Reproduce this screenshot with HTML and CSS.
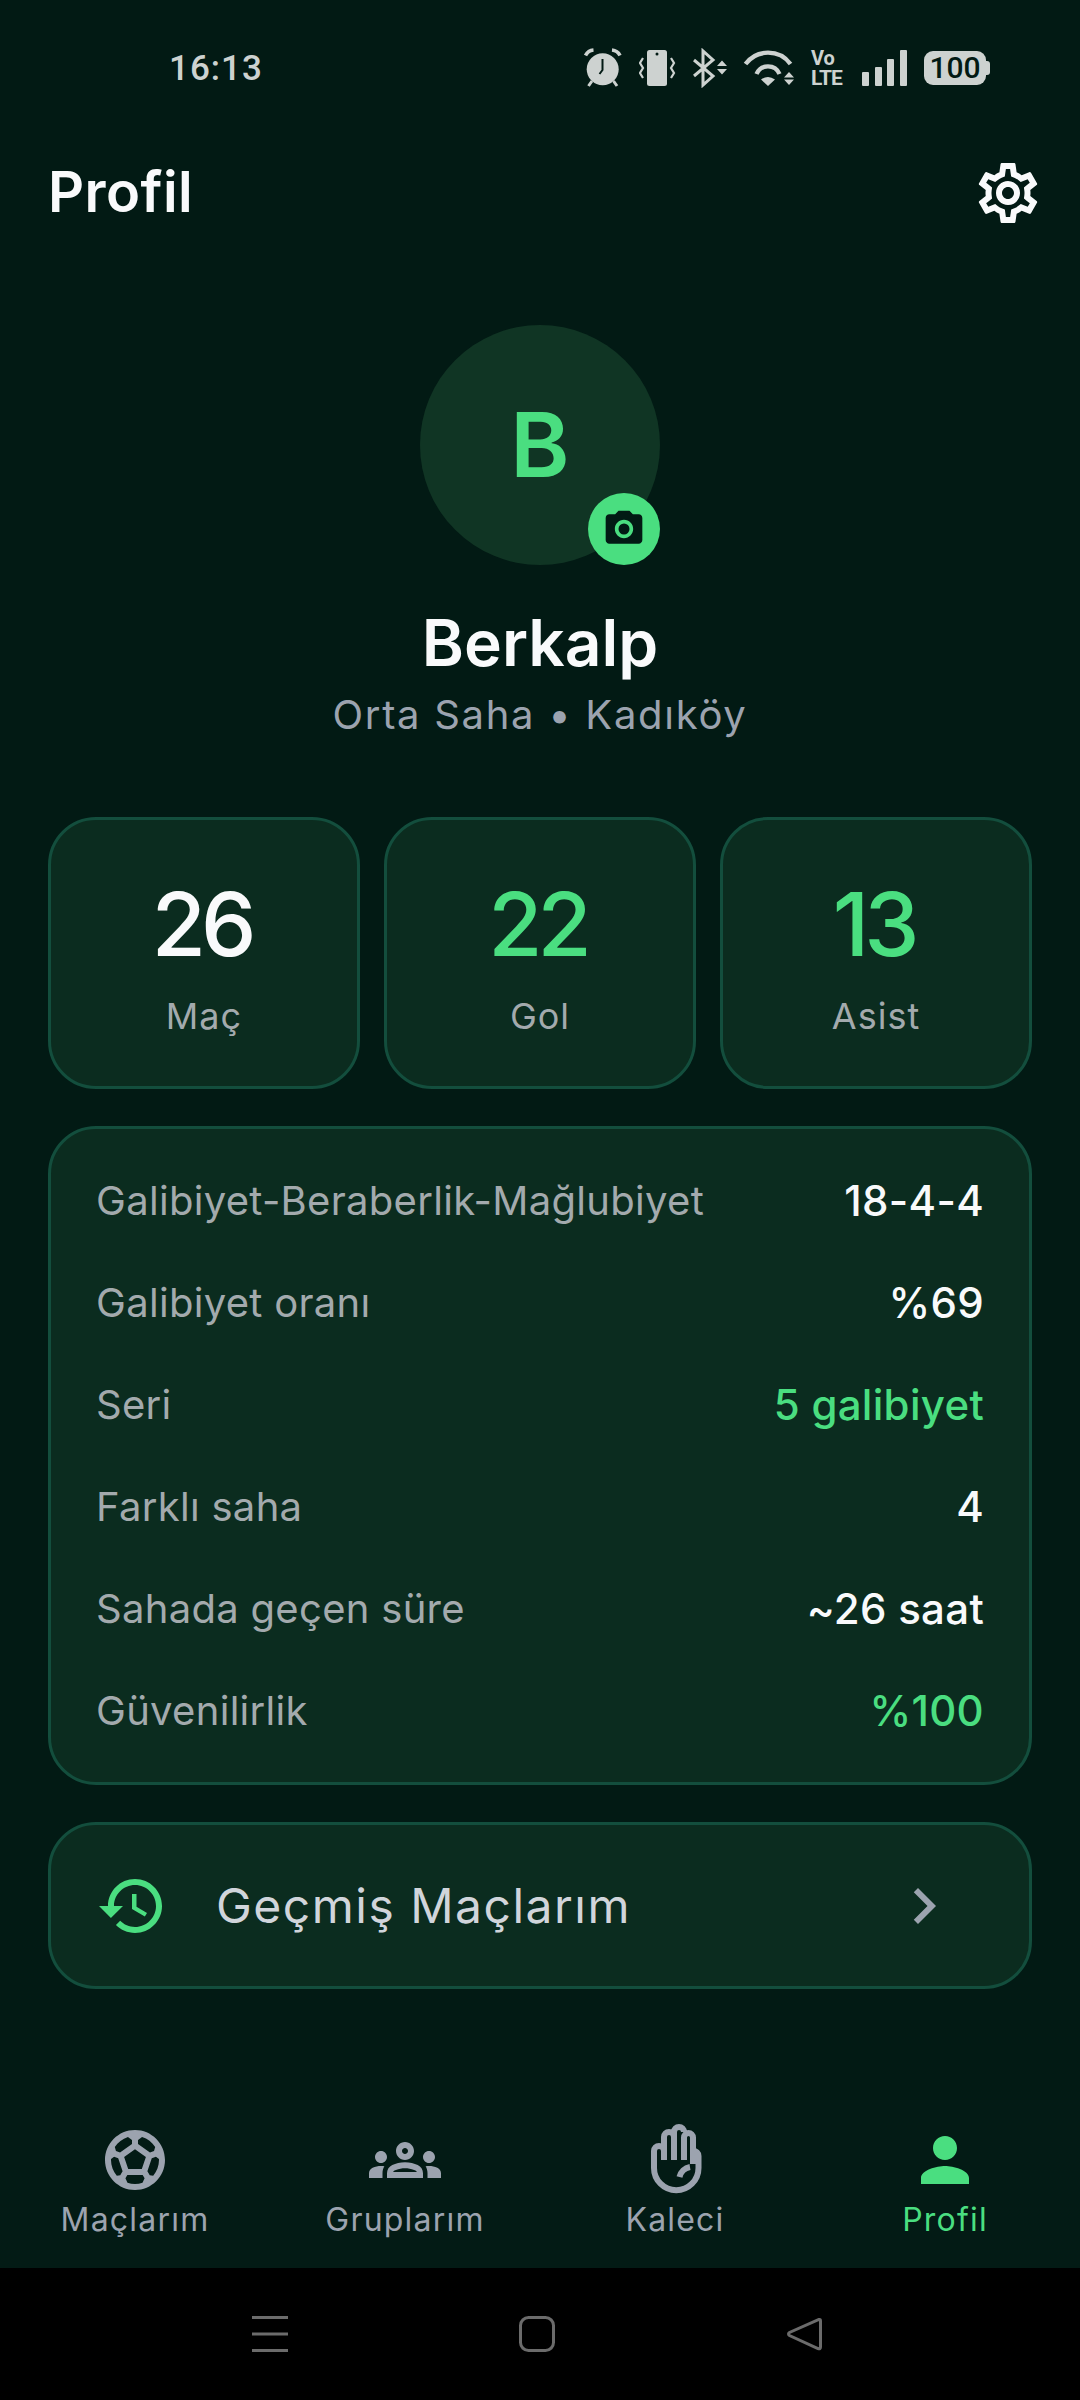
FILE: index.html
```html
<!DOCTYPE html>
<html lang="tr">

<head>
    <meta charset="UTF-8">
    <meta name="viewport" content="width=device-width, initial-scale=1.0">
    <title>Profil</title>

    <link rel="stylesheet" href="styles.css">
</head>

<body>
    <!-- status bar -->
    <div class="status">
        <span class="time">16:13</span>
        <div class="status-icons">
            <svg class="st-alarm" viewBox="0 0 39 40">
                <circle cx="18.7" cy="21.3" r="16" fill="#cdd2d0"/>
                <path d="M1.5 7.5Q4 2.5 9.5 2M36 7.500Q33.500 2.500 28 2" fill="none" stroke="#cdd2d0" stroke-width="3.600"/>
                <path d="M8 33L4.500 38M29.500 33L33 38" fill="none" stroke="#cdd2d0" stroke-width="3"/>
                <path d="M18.500 11V22L15.500 26" fill="none" stroke="#021a14" stroke-width="2"/>
            </svg>
            <svg class="st-vibrate" viewBox="0 0 38 40">
                <rect x="8" y="2" width="20" height="36" rx="2.500" fill="#cdd2d0"/>
                <circle cx="18" cy="6" r="1.500" fill="#021a14"/>
                <path d="M4 10L1 15L4 20L1 25L4 30M32 10L35 15L32 20L35 25L32 30" fill="none" stroke="#cdd2d0" stroke-width="2.200"/>
            </svg>
            <svg class="st-bluetooth" viewBox="0 0 34 40">
                <path d="M1 12L20 28L10 37V3L20 12L1 28" fill="none" stroke="#cdd2d0" stroke-width="3"/>
                <path d="M24 18L29 12.500L34 18zM24 21L29 26.500L34 21z" fill="#cdd2d0"/>
            </svg>
            <svg class="st-wifi" viewBox="0 0 52 40">
                <path d="M2.500 16A28 28 0 0 1 47.500 16M13.500 26A12.500 12.500 0 0 1 36.500 26" fill="none" stroke="#cdd2d0" stroke-width="4.400"/>
                <path d="M18 31.500Q25 26.500 32 31.500L25 38z" fill="#cdd2d0"/>
                <path d="M41 29.500L46 24L51 29.500zM41 31.500L46 37L51 31.500z" fill="#cdd2d0"/>
            </svg>
            <div class="st-volte">
                <span>Vo</span>
                <span class="lte">LTE</span>
            </div>
            <svg class="st-signal" viewBox="0 0 46 40">
                <rect x="0" y="24" width="7" height="14" rx="1" fill="#cdd2d0"/>
                <rect x="13" y="19" width="7" height="19" rx="1" fill="#cdd2d0"/>
                <rect x="25" y="11" width="7" height="27" rx="1" fill="#cdd2d0"/>
                <rect x="38" y="2" width="7" height="36" rx="1" fill="#cdd2d0"/>
            </svg>
            <div class="battery">100</div>
        </div>
    </div>

    <div class="header">
        <h1 class="title">Profil</h1>
        <svg class="icon icon-white" viewBox="0 0 24 24">
            <path d="M19.430 12.980c.04-.32.07-.64.07-.98 0-.34-.03-.66-.07-.98l2.110-1.650c.19-.15.24-.42.12-.64l-2-3.460c-.09-.16-.26-.25-.44-.25-.06 0-.12.01-.17.03l-2.490 1c-.52-.4-1.080-.73-1.690-.98l-.38-2.650C14.460 2.180 14.250 2 14 2h-4c-.25 0-.46.18-.49.42l-.38 2.650c-.61.25-1.170.59-1.690.98l-2.490-1c-.06-.02-.12-.03-.18-.03-.17 0-.34.09-.43.25l-2 3.460c-.13.22-.07.49.12.64l2.110 1.650c-.04.32-.07.65-.07.98 0 .33.03.66.07.98l-2.110 1.650c-.19.15-.24.42-.12.64l2 3.460c.09.16.26.25.44.25.06 0 .12-.01.17-.03l2.490-1c.52.4 1.080.73 1.690.98l.38 2.650c.03.24.24.42.49.42h4c.25 0 .46-.18.49-.42l.38-2.650c.61-.25 1.170-.59 1.690-.98l2.490 1c.06.02.12.03.18.03.17 0 .34-.09.43-.25l2-3.460c.12-.22.07-.49-.12-.64l-2.110-1.650zm-1.980-1.710c.04.31.05.52.05.73 0 .21-.02.43-.05.73l-.14 1.130.89.7 1.080.84-.7 1.210-1.270-.51-1.040-.42-.9.68c-.43.32-.84.56-1.250.73l-1.060.43-.16 1.130-.2 1.350h-1.400l-.19-1.350-.16-1.130-1.060-.43c-.43-.18-.83-.41-1.230-.71l-.91-.7-1.060.43-1.270.51-.7-1.210 1.080-.84.89-.7-.14-1.130c-.03-.31-.05-.54-.05-.74s.02-.43.05-.73l.14-1.130-.89-.7-1.080-.84.7-1.210 1.270.51 1.040.42.9-.68c.43-.32.84-.56 1.250-.73l1.060-.43.16-1.130.2-1.350h1.390l.19 1.350.16 1.130 1.060.43c.43.18.83.41 1.230.71l.91.7 1.060-.43 1.270-.51.7 1.210-1.070.85-.89.7.14 1.130zM12 8c-2.210 0-4 1.790-4 4s1.790 4 4 4 4-1.790 4-4-1.790-4-4-4zm0 6c-1.100 0-2-.9-2-2s.9-2 2-2 2 .9 2 2-.9 2-2 2z"/>
        </svg>
    </div>

    <div class="content">
        <div class="profile">
            <div class="avatar">
                B
                <div class="camera">
                    <svg viewBox="0 0 24 24">
                        <path d="M9 2L7.170 4H4c-1.100 0-2 .9-2 2v12c0 1.100.9 2 2 2h16c1.100 0 2-.9 2-2V6c0-1.100-.9-2-2-2h-3.170L15 2H9zm3 15c-2.760 0-5-2.240-5-5s2.240-5 5-5 5 2.240 5 5-2.240 5-5 5z"/>
                        <circle cx="12" cy="12" r="3"/>
                    </svg>
                </div>
            </div>
            <div class="name">Berkalp</div>
            <div class="sub">Orta Saha • Kadıköy</div>
        </div>

        <div class="stats">
            <div class="card stat">
                <div class="stat-num">26</div>
                <div class="stat-label">Maç</div>
            </div>
            <div class="card stat">
                <div class="stat-num green">22</div>
                <div class="stat-label">Gol</div>
            </div>
            <div class="card stat">
                <div class="stat-num green">13</div>
                <div class="stat-label">Asist</div>
            </div>
        </div>

        <div class="card details">
            <div class="row"><span class="row-label">Galibiyet-Beraberlik-Mağlubiyet</span><span class="row-value">18-4-4</span></div>
            <div class="row"><span class="row-label">Galibiyet oranı</span><span class="row-value">%69</span></div>
            <div class="row"><span class="row-label">Seri</span><span class="row-value green">5 galibiyet</span></div>
            <div class="row"><span class="row-label">Farklı saha</span><span class="row-value">4</span></div>
            <div class="row"><span class="row-label">Sahada geçen süre</span><span class="row-value">~26 saat</span></div>
            <div class="row"><span class="row-label">Güvenilirlik</span><span class="row-value green">%100</span></div>
        </div>

        <div class="card history">
            <svg class="icon icon-green" viewBox="0 0 24 24">
                <path d="M13 3c-4.970 0-9 4.030-9 9H1l3.890 3.890.07.14L9 12H6c0-3.870 3.130-7 7-7s7 3.130 7 7-3.130 7-7 7c-1.930 0-3.680-.79-4.940-2.060l-1.420 1.420C8.270 19.990 10.510 21 13 21c4.970 0 9-4.030 9-9s-4.030-9-9-9zm-1 5v5l4.280 2.540.72-1.210-3.500-2.080V8H12z"/>
            </svg>
            <span class="history-text">Geçmiş Maçlarım</span>
            <svg class="icon icon-gray" viewBox="0 0 24 24">
                <path d="M10 6L8.590 7.410 13.170 12l-4.580 4.590L10 18l6-6z"/>
            </svg>
        </div>
    </div>

    <!-- bottom tabs -->
    <div class="tabs">
        <div class="tab">
            <svg class="icon icon-gray" viewBox="0 0 24 24">
                <path d="M12 2C6.480 2 2 6.480 2 12s4.480 10 10 10 10-4.480 10-10S17.520 2 12 2zm1 3.300l1.350-.95c1.820.56 3.370 1.760 4.380 3.340l-.39 1.340-1.350.46L13 6.700V5.300zm-3.350-.95L11 5.300v1.400L7.010 9.490l-1.350-.46-.39-1.340c1.010-1.570 2.560-2.770 4.380-3.340zM7.080 17.110l-1.140.1C4.730 15.810 4 13.990 4 12c0-.12.01-.23.02-.35l1-.73 1.380.48 1.460 4.340-.78 1.370zm7.420 2.480c-.79.26-1.630.41-2.500.41s-1.710-.15-2.500-.41l-.69-1.490.64-1.100h5.110l.64 1.110-.7 1.480zM14.270 15H9.730l-1.350-4.020L12 8.440l3.630 2.540L14.270 15zm3.790 2.210l-1.140-.1-.79-1.370 1.460-4.340 1.390-.47 1 .73c.01.11.02.22.02.34 0 1.990-.73 3.810-1.940 5.210z"/>
            </svg>
            <span class="tab-label">Maçlarım</span>
        </div>
        <div class="tab">
            <svg class="icon icon-gray" viewBox="0 0 24 24">
                <path d="M4 13c1.100 0 2-.9 2-2 0-1.100-.9-2-2-2s-2 .9-2 2c0 1.100.9 2 2 2zm1.130 1.100C4.760 14.040 4.390 14 4 14c-.99 0-1.930.21-2.780.58C.48 14.900 0 15.620 0 16.430V18h4.500v-1.610c0-.83.23-1.610.63-2.290zM20 13c1.100 0 2-.9 2-2 0-1.100-.9-2-2-2s-2 .9-2 2c0 1.100.9 2 2 2zm4 3.430c0-.81-.48-1.530-1.220-1.850C21.930 14.210 20.990 14 20 14c-.39 0-.76.04-1.130.1.4.68.63 1.460.63 2.290V18H24v-1.570zm-7.760-2.780C15.070 13.140 13.630 12.750 12 12.750c-1.630 0-3.070.4-4.240.9C6.680 14.130 6 15.210 6 16.390V18h12v-1.610c0-1.180-.68-2.260-1.760-2.740zM8.070 16c.09-.23.13-.39.91-.69.97-.38 1.990-.56 3.020-.56s2.050.18 3.020.56c.77.3.81.46.91.69H8.070zM12 8c.55 0 1 .45 1 1s-.45 1-1 1-1-.45-1-1 .45-1 1-1m0-2c-1.660 0-3 1.340-3 3s1.340 3 3 3 3-1.340 3-3-1.340-3-3-3z"/>
            </svg>
            <span class="tab-label">Gruplarım</span>
        </div>
        <div class="tab">
            <svg class="icon hand" viewBox="0 0 72 72">
                <path d="M15 44V27a5 5 0 0 1 10 0M25 36V13a5 5 0 0 1 10 0M35 36V8a5 5 0 0 1 10 0M45 36V13.500a4.500 4.500 0 0 1 9 0V40M54 27h.5a5 5 0 0 1 5 5V44a22.250 22.250 0 0 1-44.500 0M40.500 53a13 13 0 0 1 10.500-10"/>
            </svg>
            <span class="tab-label">Kaleci</span>
        </div>
        <div class="tab active">
            <svg class="icon icon-green" viewBox="0 0 24 24">
                <path d="M12 12c2.210 0 4-1.790 4-4s-1.790-4-4-4-4 1.790-4 4 1.790 4 4 4zm0 2c-2.670 0-8 1.340-8 4v2h16v-2c0-2.660-5.330-4-8-4z"/>
            </svg>
            <span class="tab-label">Profil</span>
        </div>
    </div>

    <!-- android nav bar -->
    <div class="sysbar">
        <svg viewBox="0 0 36 36"><path d="M0 1.500H36M0 18H36M0 34.500H36" stroke="#6b6b6b" stroke-width="3" fill="none"/></svg>
        <svg viewBox="0 0 36 36"><rect x="1.500" y="1.500" width="33" height="33" rx="8" stroke="#6b6b6b" stroke-width="3" fill="none"/></svg>
        <svg viewBox="0 0 36 36"><path d="M33 3.500Q34.500 3 34.500 5V31Q34.500 33.500 32 32.500L3.500 19.500Q1.500 18 3.500 16.500z" stroke="#6b6b6b" stroke-width="3" fill="none"/></svg>
    </div>
</body>

</html>
```

FILE: styles.css
```css
body, html {
    margin: 0;
    padding: 0;
    height: 100%;
    font-family: Inter, "Noto Sans", sans-serif;
}

body {
    display: flex;
    flex-direction: column;
    height: 2400px;
    background-color: #021a14;
    color: #f9fafb;
}

.green {
    color: #4ade80;
}

.icon {
    display: block;
    flex-shrink: 0;
    width: 72px;
    height: 72px;
}

.icon-white {
    fill: #f9fafb;
}

.icon-green {
    fill: #4ade80;
}

.icon-gray {
    fill: #9ca3af;
}

/* status bar */
.status {
    display: flex;
    align-items: center;
    justify-content: space-between;
    height: 136px;
    padding: 0 90px 0 169px;
    color: #cdd2d0;
}

.time {
    font-family: Roboto, sans-serif;
    font-size: 35px;
    font-weight: 500;
    letter-spacing: 1px;
}

.status-icons {
    display: flex;
    align-items: center;
    gap: 16px;
    height: 40px;
}

.status-icons svg {
    display: block;
    height: 40px;
}

.st-alarm {
    width: 39px;
}

.st-vibrate {
    width: 38px;
}

.st-bluetooth {
    width: 34px;
}

.st-wifi {
    width: 52px;
}

.st-signal {
    width: 46px;
}

.st-volte {
    display: flex;
    flex-direction: column;
    width: 35px;
    font-family: Roboto, sans-serif;
    font-size: 20px;
    font-weight: 700;
    line-height: 20px;
}

.lte {
    letter-spacing: -1px;
    font-size: 21px;
}

.battery {
    position: relative;
    width: 62px;
    height: 34px;
    margin-right: 4px;
    border-radius: 9px;
    background-color: #cdd2d0;
    color: #021a14;
    font-family: Roboto, sans-serif;
    font-size: 30px;
    font-weight: 500;
    line-height: 34px;
    text-align: center;
}

.battery::after {
    content: "";
    position: absolute;
    top: 10px;
    left: 62px;
    width: 4px;
    height: 14px;
    border-radius: 0 3px 3px 0;
    background-color: #cdd2d0;
}

/* header */
.header {
    display: flex;
    align-items: center;
    justify-content: space-between;
    height: 114px;
    padding: 0 36px 0 48px;
}

.title {
    margin: 0;
    padding-bottom: 2px;
    font-size: 56px;
    font-weight: 600;
    letter-spacing: 0.4px;
}

/* main */
.content {
    flex: 1;
    padding: 75px 48px 0;
}

.profile {
    display: flex;
    flex-direction: column;
    align-items: center;
}

.avatar {
    position: relative;
    width: 240px;
    height: 240px;
    border-radius: 50%;
    background-color: #103524;
    color: #4ade80;
    font-size: 90px;
    font-weight: 600;
    line-height: 240px;
    text-align: center;
}

.camera {
    position: absolute;
    right: 0;
    bottom: 0;
    display: flex;
    align-items: center;
    justify-content: center;
    width: 72px;
    height: 72px;
    border-radius: 50%;
    background-color: #4ade80;
}

.camera svg {
    width: 44px;
    height: 44px;
    fill: #021a14;
}

.name {
    margin-top: 38px;
    font-size: 64px;
    font-weight: 600;
    line-height: 80px;
}

.sub {
    margin-top: 7px;
    color: #9ca3af;
    font-size: 40px;
    line-height: 50px;
    letter-spacing: 1.7px;
}

.card {
    box-sizing: border-box;
    border: 3px solid #134e3d;
    border-radius: 48px;
    background-color: #0b2c1f;
}

.stats {
    display: grid;
    grid-template-columns: repeat(3, 1fr);
    gap: 24px;
    margin-top: 77px;
}

.stat {
    height: 272px;
    padding-top: 54px;
    text-align: center;
}

.stat-num {
    padding-right: 5px;
    font-size: 88px;
    font-weight: 500;
    line-height: 100px;
    letter-spacing: -5px;
}

.stat-label {
    margin-top: 20px;
    color: #a3aaad;
    font-size: 36px;
    line-height: 44px;
    letter-spacing: 1px;
}

.details {
    margin-top: 37px;
    padding: 20px 45px 21px;
}

.row {
    display: flex;
    align-items: center;
    justify-content: space-between;
    height: 102px;
    font-size: 40px;
    letter-spacing: 0.3px;
}

.row-label {
    color: #a3aaad;
}

.row-value {
    font-size: 42px;
    font-weight: 500;
}

.history {
    display: flex;
    align-items: center;
    gap: 48px;
    height: 167px;
    margin-top: 37px;
    padding: 0 69px 0 45px;
}

.history-text {
    flex: 1;
    color: #d1d5db;
    font-size: 48px;
    letter-spacing: 1.5px;
}

/* bottom tabs */
.tabs {
    display: grid;
    grid-template-columns: repeat(4, 1fr);
    height: 144px;
    padding-top: 24px;
    background-color: #031b15;
}

.tab {
    display: flex;
    flex-direction: column;
    align-items: center;
    color: #9ca3af;
}

.tab.active {
    color: #4ade80;
}

.tab-label {
    margin-top: 2px;
    font-size: 32px;
    line-height: 44px;
    letter-spacing: 1.2px;
}

.hand {
    fill: none;
    stroke: #9ca3af;
    stroke-width: 6;
}

/* android nav bar */
.sysbar {
    display: flex;
    gap: 231px;
    height: 84px;
    padding: 48px 0 0 252px;
    background-color: #000;
}

.sysbar svg {
    width: 36px;
    height: 36px;
}
```
